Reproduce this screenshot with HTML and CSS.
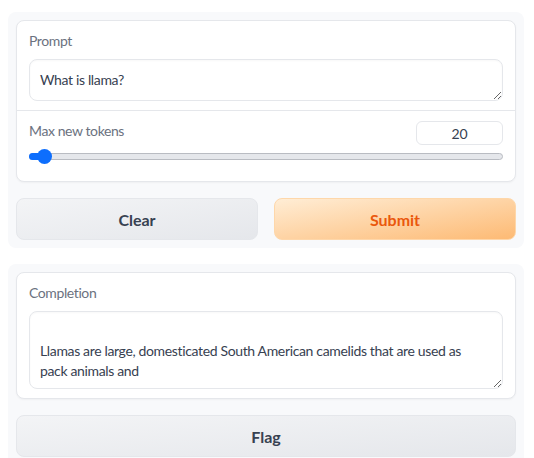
FILE: index.html
```html
<!DOCTYPE html>
<html>
<head>
<meta charset="utf-8">
<link rel="stylesheet" href="styles.css">
</head>
<body>
<div class="panel">
  <div class="card">
    <div class="block">
      <label class="label">Prompt</label>
      <textarea class="input" rows="1">What is llama?</textarea>
    </div>
    <div class="block slider-block">
      <div class="slider-head">
        <span class="label">Max new tokens</span>
        <input class="number" type="text" value="20">
      </div>
      <div class="track">
        <div class="fill"></div>
        <div class="thumb"></div>
      </div>
    </div>
  </div>
  <div class="btn-row">
    <button class="btn secondary">Clear</button>
    <button class="btn primary">Submit</button>
  </div>
</div>
<div class="panel">
  <div class="card">
    <div class="block">
      <label class="label">Completion</label>
      <textarea class="input output" rows="3">

Llamas are large, domesticated South American camelids that are used as pack animals and</textarea>
    </div>
  </div>
  <div class="btn-row">
    <button class="btn secondary">Flag</button>
  </div>
</div>
</body>
</html>
```

FILE: styles.css
```css
* { box-sizing: border-box; }
body {
  margin: 0;
  padding: 12px 10px 0 8px;
  background: #ffffff;
  font-family: "Lato", "Open Sans", sans-serif;
  color: #374151;
}
.panel {
  background: #f8f9fb;
  border-radius: 8px;
  padding: 8px;
  display: flex;
  flex-direction: column;
  gap: 16px;
  margin-bottom: 16px;
}
.card {
  background: #ffffff;
  border: 1px solid #e5e7eb;
  border-radius: 8px;
  box-shadow: 0 1px 2px rgba(0,0,0,0.04);
}
.block {
  padding: 10px 12px 9px;
  display: flex;
  flex-direction: column;
}
.block + .block {
  border-top: 1px solid #e5e7eb;
}
.label {
  font-size: 14px;
  line-height: 20px;
  letter-spacing: -0.4px;
  color: #6b7280;
  margin-bottom: 8px;
}
.input {
  font-family: inherit;
  font-size: 14px;
  line-height: 20px;
  letter-spacing: -0.35px;
  color: #374151;
  border: 1px solid #e5e7eb;
  border-radius: 8px;
  padding: 10px 10px;
  width: 100%;
  height: 42px;
  resize: vertical;
  outline: none;
  box-shadow: inset 0 1px 2px rgba(0,0,0,0.03);
  background: #fff;
  display: block;
  overflow: hidden;
}
.output {
  height: 78px;
  padding-top: 9px;
  padding-right: 28px;
}
.slider-block {
  padding-top: 10px;
  padding-bottom: 21px;
}
.slider-head {
  display: flex;
  justify-content: space-between;
  align-items: flex-start;
}
.slider-head .label { margin-bottom: 0; }
.number {
  width: 87px;
  height: 24px;
  border: 1px solid #e5e7eb;
  border-radius: 6px;
  text-align: center;
  font-family: inherit;
  font-size: 14px;
  color: #374151;
  outline: none;
  padding: 0;
}
.track {
  position: relative;
  margin-top: 8px;
  height: 7px;
  border: 1px solid #b9bcc2;
  border-radius: 4px;
  background: #e5e7eb;
}
.fill {
  position: absolute;
  left: -1px;
  top: -1px;
  width: 16px;
  height: 7px;
  background: #0d6efd;
  border-radius: 4px 0 0 4px;
}
.thumb {
  position: absolute;
  left: 7px;
  top: -5px;
  width: 15px;
  height: 15px;
  border-radius: 50%;
  background: #0d6efd;
}
.btn-row {
  display: flex;
  gap: 16px;
}
.btn {
  flex: 1;
  height: 42px;
  border-radius: 8px;
  font-family: inherit;
  font-size: 16px;
  font-weight: 700;
  cursor: pointer;
}
.secondary {
  background: linear-gradient(to bottom right, #f3f4f6, #e5e7eb);
  border: 1px solid #e5e7eb;
  color: #374151;
}
.primary {
  background: linear-gradient(to bottom right, #ffedd5, #fdba74);
  border: 1px solid #fed7aa;
  color: #ea580c;
}
```
